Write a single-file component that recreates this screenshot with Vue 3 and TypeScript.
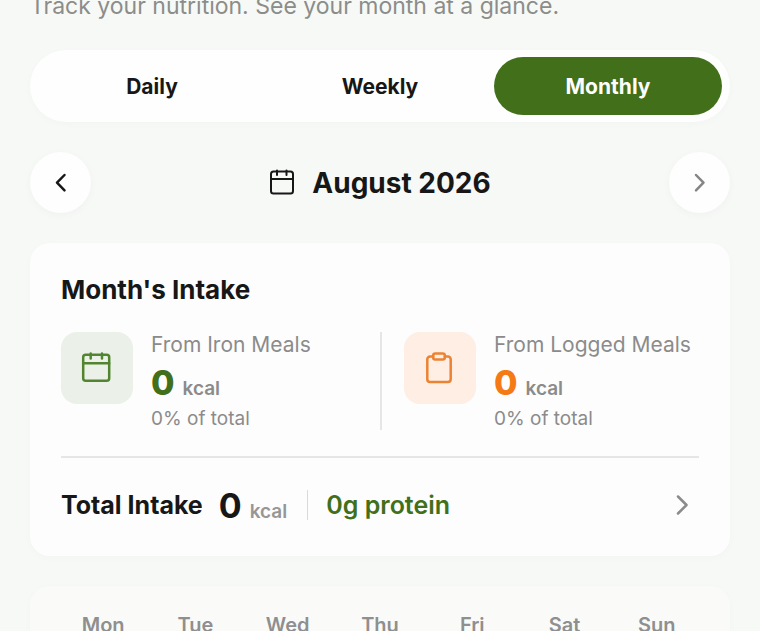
<script setup lang="ts">
import { ref } from 'vue'

type Period = 'Daily' | 'Weekly' | 'Monthly'

interface Source {
  id: string
  label: string
  kcal: number
  share: number
}

const periods: Period[] = ['Daily', 'Weekly', 'Monthly']
const active = ref<Period>('Monthly')

const sources: Source[] = [
  { id: 'iron', label: 'From Iron Meals', kcal: 0, share: 0 },
  { id: 'logged', label: 'From Logged Meals', kcal: 0, share: 0 },
]

const weekdays: string[] = ['Mon', 'Tue', 'Wed', 'Thu', 'Fri', 'Sat', 'Sun']
</script>

<template>
  <main class="page">
    <p class="subtitle">Track your nutrition. See your month at a glance.</p>

    <nav class="tabs" aria-label="Period">
      <button
        v-for="period in periods"
        :key="period"
        type="button"
        class="tab"
        :class="{ active: period === active }"
        :aria-pressed="period === active"
        @click="active = period"
      >
        {{ period }}
      </button>
    </nav>

    <div class="month-nav">
      <button type="button" class="round" aria-label="Previous month">
        <svg width="12" height="20" viewBox="0 0 12 20" class="chevron">
          <path d="M9.500 2 2 9.700l7.500 7.700" />
        </svg>
      </button>
      <h1 class="month">
        <svg class="month-icon" width="26" height="28" viewBox="0 0 26 28">
          <rect x="2" y="2.500" width="22" height="22" rx="2.500" />
          <path d="M2 10h22M8 1.500v4.500M17.500 1.500v4.500" />
        </svg>
        August 2026
      </h1>
      <button type="button" class="round muted" aria-label="Next month">
        <svg width="12" height="20" viewBox="0 0 12 20" class="chevron">
          <path d="m2 2 7.500 7.700-7.500 7.700" />
        </svg>
      </button>
    </div>

    <section class="card intake">
      <h2 class="title">Month's Intake</h2>
      <div class="sources">
        <div v-for="s in sources" :key="s.id" class="source" :class="s.id">
          <span class="tile">
            <svg v-if="s.id === 'iron'" width="32" height="32" viewBox="0 0 32 32">
              <rect x="2.200" y="2.700" width="26" height="26" rx="2.500" />
              <path d="M2.200 11.200h26M9.700 1.500v5M21 1.500v5" />
            </svg>
            <svg v-else width="32" height="32" viewBox="0 0 32 32">
              <path d="M9.200 4.500H6a2.700 2.700 0 0 0-2.700 2.700v20a2.700 2.700 0 0 0 2.700 2.700h18a2.700 2.700 0 0 0 2.700-2.700v-20A2.700 2.700 0 0 0 24 4.500h-3.200" />
              <rect x="9.200" y="1.600" width="11.600" height="6" rx="2" />
            </svg>
          </span>
          <div class="figures">
            <p class="label">{{ s.label }}</p>
            <p class="amount"><strong>{{ s.kcal }}</strong> <span>kcal</span></p>
            <p class="share">{{ s.share }}% of total</p>
          </div>
        </div>
      </div>
      <button type="button" class="total">
        <span class="total-label">Total Intake</span>
        <span class="total-amount"><strong>0</strong> <span>kcal</span></span>
        <span class="protein">0g protein</span>
        <svg width="15" height="22" viewBox="0 0 15 22" class="chevron more">
          <path d="m4 2.500 8.500 8.500L4 19.500" />
        </svg>
      </button>
    </section>

    <section class="card calendar">
      <div class="weekdays">
        <span v-for="day in weekdays" :key="day">{{ day }}</span>
      </div>
    </section>
  </main>
</template>

<style>
body {
  margin: 0;
  background: #f7f9f6;
}
</style>

<style scoped>
.page {
  box-sizing: border-box;
  height: 100vh;
  overflow: hidden;
  padding: 0 30px;
  background: #f7f9f6;
  color: #171717;
  font-family: Inter, sans-serif;
}

p,
h1,
h2 {
  margin: 0;
}

button {
  border: 0;
  padding: 0;
  background: none;
  color: inherit;
  font: inherit;
  cursor: pointer;
}

svg {
  display: block;
  flex: none;
  fill: none;
  stroke: currentColor;
  stroke-width: 2;
  stroke-linecap: round;
  stroke-linejoin: round;
}

.subtitle {
  margin: -8px 0 30px;
  color: #8b8d8a;
  font-size: 23px;
  line-height: 28px;
  white-space: nowrap;
}

.tabs {
  display: grid;
  grid-template-columns: repeat(3, 1fr);
  padding: 7px 8px;
  border-radius: 36px;
  background: #fdfefd;
  box-shadow: 0 2px 8px rgba(0, 0, 0, 0.02);
}

.tab {
  height: 58px;
  border-radius: 29px;
  font-size: 21px;
  font-weight: 700;
}

.tab.active {
  background: #416f1a;
  color: #fdfefd;
}

.month-nav {
  display: flex;
  align-items: center;
  justify-content: space-between;
  margin: 30px 0;
}

.round {
  display: grid;
  place-items: center;
  width: 61px;
  height: 61px;
  border-radius: 50%;
  background: #fdfefd;
  box-shadow: 0 2px 8px rgba(0, 0, 0, 0.03);
}

.muted {
  color: #858585;
}

.chevron {
  stroke-width: 2.5;
}

.month {
  display: flex;
  align-items: center;
  gap: 17px;
  font-size: 28px;
  font-weight: 700;
  line-height: 34px;
}

.card {
  border-radius: 20px;
  background: #fdfdfd;
  box-shadow: 0 2px 10px rgba(0, 0, 0, 0.02);
}

.intake {
  padding: 30px 31px 4px;
}

.title {
  font-size: 26px;
  font-weight: 700;
  line-height: 34px;
}

.sources {
  display: grid;
  grid-template-columns: 1fr 1fr;
  margin-top: 25px;
  padding-bottom: 26px;
  border-bottom: 2px solid #e5e6e5;
}

.source {
  display: flex;
  gap: 18px;
  color: #8b8b8b;
  white-space: nowrap;
}

.logged {
  padding-left: 22px;
  border-left: 2px solid #e5e6e5;
}

.tile {
  display: grid;
  flex: none;
  place-items: center;
  width: 72px;
  height: 72px;
  border-radius: 16px;
}

.tile svg {
  stroke-width: 2.5;
}

.iron .tile {
  background: #ebf1e9;
  color: #528530;
}

.logged .tile {
  background: #feeee4;
  color: #ec8334;
}

.label {
  font-size: 21px;
  line-height: 26px;
}

.amount {
  display: flex;
  align-items: baseline;
  gap: 8px;
  margin: 5px 0;
  font-size: 19px;
  font-weight: 600;
  line-height: 24px;
}

.amount strong {
  font-size: 34px;
  font-weight: 800;
  line-height: 40px;
}

.iron strong {
  color: #416f1a;
}

.logged strong {
  color: #f57a15;
}

.share {
  font-size: 19px;
  line-height: 22px;
}

.total {
  display: flex;
  align-items: center;
  width: 100%;
  height: 94px;
  white-space: nowrap;
}

.total-label {
  font-size: 25px;
  font-weight: 700;
}

.total-amount {
  display: flex;
  align-items: baseline;
  gap: 8px;
  margin-left: 16px;
  color: #969696;
  font-size: 19px;
  font-weight: 600;
}

.total-amount strong {
  color: #171717;
  font-size: 34px;
  font-weight: 700;
}

.protein {
  margin-left: 20px;
  padding-left: 18px;
  border-left: 1px solid #d9dad9;
  color: #416f1a;
  font-size: 25px;
  font-weight: 600;
  line-height: 30px;
}

.more {
  margin-left: auto;
  margin-right: 10px;
  color: #8b8b8b;
}

.calendar {
  margin-top: 30px;
  padding: 26px 27px;
  background: #fafbf9;
}

.weekdays {
  display: grid;
  grid-template-columns: repeat(7, 1fr);
  color: #8f8f8f;
  font-size: 20px;
  font-weight: 600;
  line-height: 26px;
  text-align: center;
}
</style>
